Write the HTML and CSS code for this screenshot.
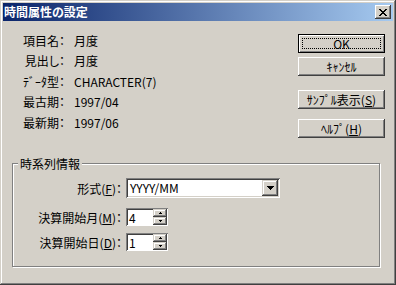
FILE: index.html
```html
<!DOCTYPE html>
<html lang="ja">
<head>
<meta charset="utf-8">
<title>時間属性の設定</title>
<link rel="stylesheet" href="styles.css">
</head>
<body>
<div class="window">
  <div class="titlebar">
    <span class="title">時間属性の設定</span>
    <div class="close">
      <svg width="8" height="7" viewBox="0 0 8 7" shape-rendering="crispEdges"><path d="M0 0h2v1h-2zM6 0h2v1h-2zM1 1h2v1h-2zM5 1h2v1h-2zM2 2h4v1h-4zM3 3h2v1h-2zM2 4h4v1h-4zM1 5h2v1h-2zM5 5h2v1h-2zM0 6h2v1h-2zM6 6h2v1h-2z" fill="#000"/></svg>
    </div>
  </div>
  <div class="body">
    <div class="top">
      <div class="info">
        <span class="lbl">項目名：</span><span class="val">月度</span>
        <span class="lbl">見出し：</span><span class="val">月度</span>
        <span class="lbl">ﾃﾞｰﾀ型：</span><span class="val">CHARACTER(7)</span>
        <span class="lbl">最古期：</span><span class="val">1997/04</span>
        <span class="lbl">最新期：</span><span class="val">1997/06</span>
      </div>
      <div class="buttons">
        <div class="btn btn-default"><div class="focus">OK</div></div>
        <div class="btn btn-cancel">ｷｬﾝｾﾙ</div>
        <div class="btn btn-sample">ｻﾝﾌﾟﾙ表示(<u>S</u>)</div>
        <div class="btn btn-help">ﾍﾙﾌﾟ(<u>H</u>)</div>
      </div>
    </div>
    <div class="group">
      <div class="group-title">時系列情報</div>
      <div class="fields">
        <div class="field field-combo">
          <span class="field-label">形式(<u>F</u>)：</span>
          <div class="combo">
            <span class="combo-text">YYYY/MM</span>
            <div class="combo-btn">
              <svg width="7" height="4" viewBox="0 0 7 4" shape-rendering="crispEdges"><path d="M0 0h7v1h-7zM1 1h5v1h-5zM2 2h3v1h-3zM3 3h1v1h-1z" fill="#000"/></svg>
            </div>
          </div>
        </div>
        <div class="field">
          <span class="field-label">決算開始月(<u>M</u>)：</span>
          <div class="spin">
            <span class="spin-val">4</span>
            <div class="spin-btns">
              <div class="spin-btn"><svg width="3" height="2" viewBox="0 0 3 2" shape-rendering="crispEdges"><path d="M1 0h1v1h-1zM0 1h3v1h-3z" fill="#000"/></svg></div>
              <div class="spin-btn"><svg width="3" height="2" viewBox="0 0 3 2" shape-rendering="crispEdges"><path d="M0 0h3v1h-3zM1 1h1v1h-1z" fill="#000"/></svg></div>
            </div>
          </div>
        </div>
        <div class="field">
          <span class="field-label">決算開始日(<u>D</u>)：</span>
          <div class="spin">
            <span class="spin-val">1</span>
            <div class="spin-btns">
              <div class="spin-btn"><svg width="3" height="2" viewBox="0 0 3 2" shape-rendering="crispEdges"><path d="M1 0h1v1h-1zM0 1h3v1h-3z" fill="#000"/></svg></div>
              <div class="spin-btn"><svg width="3" height="2" viewBox="0 0 3 2" shape-rendering="crispEdges"><path d="M0 0h3v1h-3zM1 1h1v1h-1z" fill="#000"/></svg></div>
            </div>
          </div>
        </div>
      </div>
    </div>
  </div>
</div>
</body>
</html>
```

FILE: styles.css
```css
* { box-sizing: border-box; }

html, body {
  margin: 0;
  padding: 0;
  background: #d4d0c8;
}

body {
  font-family: "Noto Sans CJK JP", "Noto Sans", sans-serif;
  font-size: 12px;
  font-feature-settings: "palt";
  color: #000;
}

.window {
  width: 396px;
  height: 285px;
  padding: 3px;
  background: #d4d0c8;
  box-shadow: inset -1px -1px #404040, inset 1px 1px #d4d0c8, inset -2px -2px #808080, inset 2px 2px #fff;
  display: flex;
  flex-direction: column;
}

.titlebar {
  height: 18px;
  flex: none;
  background: linear-gradient(to right, #0a246a, #a6caf0);
  display: flex;
  align-items: center;
  justify-content: space-between;
  padding: 0 2px 0 1px;
}

.title {
  color: #fff;
  font-weight: bold;
  line-height: 18px;
}

.close {
  width: 16px;
  height: 14px;
  background: #d4d0c8;
  box-shadow: inset -1px -1px #404040, inset 1px 1px #fff, inset -2px -2px #808080, inset 2px 2px #d4d0c8;
  display: flex;
  align-items: center;
  justify-content: center;
  padding-right: 1px;
}

.close svg { display: block; }

.body {
  flex: 1;
  display: flex;
  flex-direction: column;
}

.top {
  display: flex;
  align-items: flex-start;
}

.info {
  padding-top: 9px;
  display: grid;
  grid-template-columns: 62px auto;
  column-gap: 9px;
  grid-auto-rows: 20.5px;
  align-items: center;
}

.lbl {
  justify-self: end;
  white-space: nowrap;
}

.val { white-space: nowrap; }

.buttons {
  margin-left: auto;
  margin-right: 8px;
  padding-top: 13px;
  width: 87px;
  display: flex;
  flex-direction: column;
}

.btn {
  height: 19px;
  background: #d4d0c8;
  box-shadow: inset -1px -1px #404040, inset 1px 1px #fff, inset -2px -2px #808080, inset 2px 2px #d4d0c8;
  display: flex;
  align-items: center;
  justify-content: center;
  line-height: 14px;
  white-space: nowrap;
}

.btn-default {
  border: 1px solid #000;
  box-shadow: inset 1px 1px #fff, inset -1px -1px #808080;
  padding: 3px;
  align-items: stretch;
}

.focus {
  flex: 1;
  border: 1px dotted #000;
  display: flex;
  align-items: center;
  justify-content: center;
}

.btn-cancel { margin-top: 4px; }
.btn-sample { margin-top: 14px; }
.btn-help { margin-top: 10px; }

u { text-decoration: underline; text-underline-offset: 1px; }

.group {
  margin: 25px 13px 0 9px;
  border: 1px solid #808080;
  box-shadow: inset 1px 1px #fff, 1px 1px #fff;
  padding: 0 0 15px 0;
}

.group-title {
  margin: -8px 0 0 5px;
  padding: 0 2px;
  width: fit-content;
  background: #d4d0c8;
  line-height: 15px;
}

.fields {
  padding-top: 7px;
  display: flex;
  flex-direction: column;
}

.field {
  display: flex;
  align-items: center;
}

.field-combo { margin-bottom: 10px; }
.field + .field:not(.field-combo) ~ .field { margin-top: 7px; }

.field-label {
  width: 109px;
  margin-right: 4px;
  text-align: right;
  white-space: nowrap;
}

.combo {
  width: 154px;
  height: 20px;
  padding: 2px;
  background: #fff;
  box-shadow: inset 1px 1px #808080, inset -1px -1px #fff, inset 2px 2px #404040, inset -2px -2px #d4d0c8;
  display: flex;
}

.combo-text {
  flex: 1;
  padding-left: 2px;
  line-height: 16px;
}

.combo-btn {
  width: 16px;
  height: 16px;
  background: #d4d0c8;
  box-shadow: inset -1px -1px #404040, inset 1px 1px #d4d0c8, inset -2px -2px #808080, inset 2px 2px #fff;
  display: flex;
  align-items: center;
  justify-content: center;
}

.combo-btn svg, .spin-btn svg { display: block; }

.spin {
  width: 42px;
  height: 18px;
  padding: 1px;
  background: #fff;
  box-shadow: inset 1px 1px #808080, inset -1px -1px #fff, inset 2px 2px #404040;
  display: flex;
}

.spin-val {
  flex: 1;
  padding-left: 2px;
  padding-top: 1px;
  line-height: 15px;
}

.spin-btns {
  width: 14px;
  display: flex;
  flex-direction: column;
}

.spin-btn {
  flex: 1;
  background: #d4d0c8;
  box-shadow: inset -1px -1px #404040, inset 1px 1px #d4d0c8, inset -2px -2px #808080, inset 2px 2px #fff;
  display: flex;
  align-items: center;
  justify-content: center;
}
```
